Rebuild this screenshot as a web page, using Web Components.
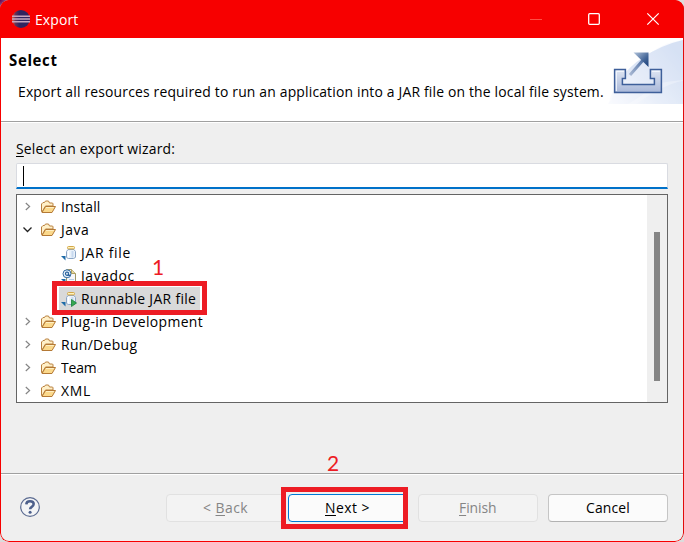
<!DOCTYPE html>
<html lang="en"><head><meta charset="utf-8"><title>Export</title>
<style>
html,body{margin:0;width:684px;height:542px;overflow:hidden}
body{background:radial-gradient(circle at 0 0,#650050 0,#b58aa9 10px,#dcdcdc 24px);font-family:"Open Sans","Noto Sans",sans-serif;font-size:14.5px;color:#000}
</style></head><body>
<export-dialog></export-dialog>
<script>
const define=(name,html,setup)=>customElements.define(name,class extends HTMLElement{
  connectedCallback(){
    if(this.shadowRoot)return;
    const t=document.createElement('template');t.innerHTML=html;
    this.attachShadow({mode:'open'}).append(t.content.cloneNode(true));
    if(setup)setup(this,this.shadowRoot);
  }
});

// Text line, slightly condensed, whose tracking is adjusted so that it spans the requested width.
define('fit-label',`<style>:host{display:inline-block;white-space:pre;line-height:20px}span{display:inline-block;transform:scaleX(.96);transform-origin:0 0}</style><span><slot></slot></span>`,(h,r)=>{
  const s=r.querySelector('span'),w=+h.getAttribute('w');
  h.style.width=w+'px';
  s.style.letterSpacing=((w/.96-s.offsetWidth)/h.textContent.length)+'px';
});

const folder=`<svg width="16" height="14" viewBox="0 0 16 14"><path d="M1.5 11.5V4L3 2.5h1.5L5.5 1h3L9.5 3h3l.5.8V6H5.5L2 12z" fill="#fff0c8" stroke="#b9803f"/><path d="M2 12.5L5.5 6.5h10L12 12.5z" fill="#fbd98c" stroke="#b47935" stroke-linejoin="round"/><path d="M6 7.5h7.8" stroke="#fff0c4"/></svg>`;
const corner=`<path d="M0 11h4.5v4.5z" fill="#1e6ba8"/>`;
const jar=`<path d="M7 4.5h6l1.5 2v5.5q-.8 1.5-2 1.5H7.5q-1.4 0-2-1.5V6.5z" fill="#e9f1fa" stroke="#8aa5c6"/><path d="M7.5 6v6.5" stroke="#fff" stroke-width="1.5"/><path d="M11.5 6v6.5" stroke="#c7d9ef" stroke-width="2"/><rect x="6.5" y="1.5" width="7" height="2.4" rx="1" fill="#fff3bd" stroke="#d3a748"/>`;
const icons={folder,
 jar:`<svg width="16" height="16">${jar}${corner}</svg>`,
 run:`<svg width="16" height="16">${jar}${corner}<path d="M10.5 8.5L15.5 12L10.5 15.5z" fill="#36a853" stroke="#168037" stroke-width=".8"/></svg>`,
 doc:`<svg width="16" height="16"><path d="M5.5 1.5h5l4 4v8h-9z" fill="#f6f7fb" stroke="#9c9669"/><path d="M10.5 1.5v4h4" fill="#e7d8a2" stroke="#b3a25e"/><path d="M8 11.5h5" stroke="#b7cce6"/><circle cx="6" cy="5.8" r="4" fill="#e5f0fa" stroke="#346da4"/><path d="M7.5 4.3v3q1.3.7 1.5-.8M7.5 5.8a1.5 1.7 0 1 1 0-.2" fill="none" stroke="#205b98" stroke-width="1.1"/>${corner}</svg>`};

define('tree-row',`<style>
:host{display:flex;align-items:center;height:23px;padding-left:4px}
.t{width:13px;height:9px;display:flex;justify-content:center;margin-right:6px}
.i{width:16px;display:flex;margin-right:5px}
:host([leaf]){padding-left:44px}
:host([leaf]) .t{display:none}
:host([leaf]) .i{margin-right:4px}
:host([selected]){width:141px;background:#d9d9d9;box-sizing:border-box;margin-left:42px;padding-left:2px}
fit-label{padding-top:1px}
svg{display:block}
</style><span class="t"></span><span class="i"></span><slot></slot>`,(h,r)=>{
  r.querySelector('.i').innerHTML=icons[h.getAttribute('icon')];
  r.querySelector('.t').innerHTML=h.hasAttribute('open')
   ?'<svg width="11" height="9"><path d="M1.5 2.5L5.5 6.5L9.5 2.5" fill="none" stroke="#222" stroke-width="1.3"/></svg>'
   :'<svg width="11" height="9"><path d="M3.8 1L7.6 4.5L3.8 8" fill="none" stroke="#858585" stroke-width="1.2"/></svg>';
});

define('push-button',`<style>
:host{display:flex;align-items:center;justify-content:center;width:120px;height:28px;box-sizing:border-box;padding-right:1px;border:1px solid #c5c5c5;border-bottom-color:#b2b2b2;border-radius:4px;background:#fbfbfb}
:host([disabled]){color:#858585;background:#f3f3f3;border-color:#e1e1e1}
:host([primary]){border-color:#0078d4}
</style><slot></slot>`);

define('title-bar',`<style>
:host{display:flex;align-items:center;height:38px;flex:none;background:#f70000;color:#fff;padding:0 24px 0 11px}
.g{flex:1}svg{flex:none;display:block}.a{margin-right:4px}
::slotted(*){margin-top:2px}
</style><svg class="a" width="20" height="20"><defs><linearGradient id="b" x2="1"><stop stop-color="#ee6840"/><stop offset=".18" stop-color="#683454"/><stop offset=".4" stop-color="#30245f"/></linearGradient></defs><circle cx="10" cy="10" r="9" fill="url(#b)"/><path d="M1 7.3h18M1 10h18M1 12.7h18" stroke="#c6a5bd" stroke-width="1.5"/></svg>
<slot></slot><span class="g"></span>
<svg width="130" height="14"><path d="M0 7.5h12" stroke="#ff4f45"/><rect x="58.7" y="1.7" width="10.6" height="10.6" rx="1" fill="none" stroke="#fff" stroke-width="1.3"/><path d="M117.3 1.3l11.4 11.4m0-11.4L117.3 12.7" stroke="#fff" stroke-width="1.2"/></svg>`);

define('wizard-banner',`<style>
:host{display:flex;flex:none;height:83px;background:#fff;justify-content:space-between;border-bottom:1px solid #a0a0a0;box-shadow:0 1px #fff}
.x{padding:12px 0 0 8px}h1{margin:0;font-size:15.6px;line-height:20px;font-weight:700;height:20px}
.d{padding:12px 0 0 9px}svg{display:block}
</style><div class="x"><h1><slot name="title"></slot></h1><div class="d"><slot></slot></div></div>
<svg width="75" height="66"><defs>
<linearGradient id="s" x1="0" x2="1" y1="1" y2=".3"><stop stop-color="#fff"/><stop offset=".45" stop-color="#e0e8f7"/><stop offset="1" stop-color="#c3d4ef"/></linearGradient>
<linearGradient id="t" x2="0" y2="1"><stop stop-color="#dfe6f3"/><stop offset="1" stop-color="#a9b8d9"/></linearGradient>
<linearGradient id="q" x2="1" y2="1"><stop stop-color="#b4c5dc"/><stop offset=".6" stop-color="#446698"/><stop offset="1" stop-color="#183d79"/></linearGradient>
<linearGradient id="w" x1="1" x2="0" y2="1"><stop stop-color="#4d6ea3"/><stop offset="1" stop-color="#a9b8d3"/></linearGradient></defs>
<path d="M0 66Q9 37 34 20Q53 7 75 2V66z" fill="url(#s)"/><path d="M42 15Q56 4 75 2V43Q58 45 28 66H0Q24 31 42 15" fill="#f2f6fd" opacity=".4"/><path d="M47 46Q62 43 75 42V66H20Q36 57 47 46" fill="#fff" opacity=".3"/>
<path d="M6.6 31.6H17.4V40.4H14.4V46.4H46.4V40.4H42.4V31.6H53.4V54.4H6.6z" fill="url(#t)" stroke="#3e5f9a" stroke-width="1.5"/><path d="M8.3 53V33.3H16M44 33.3h7.8" fill="none" stroke="#f7faff" stroke-width="1"/>
<path d="M22 37L36 21" stroke="url(#w)" stroke-width="3"/><path d="M25.5 14.5h15v14.5z" fill="url(#q)"/></svg>`);

define('search-field',`<style>:host{display:block;height:26px;box-sizing:border-box;background:#fff;border:1px solid #d9dbe1;border-bottom:2px solid #0071c9;border-radius:2px 2px 0 0;padding:2px 0 0 6px}i{display:block;width:1px;height:20px;background:#000}</style><i></i>`);

define('wizard-tree',`<style>
:host{display:flex;height:209px;box-sizing:border-box;border:1px solid #646464;background:#fff;margin-top:5px}
.r{flex:1}.s{width:20px;background:#efefef;padding:37px 0 0 7px;box-sizing:border-box}
.s i{display:block;width:6px;height:149px;background:#858585}
</style><div class="r"><slot></slot></div><div class="s"><i></i></div>`);

define('mark-box',`<style>:host{position:absolute;box-sizing:border-box;border:5px solid #ed1c24}</style>`);
define('mark-number',`<style>:host{position:absolute;color:#ed1c24;font:21px/24px Lato,sans-serif}</style><slot></slot>`);
define('help-icon',`<style>:host{display:block;width:20px;height:20px}svg{display:block}</style><svg width="20" height="20"><circle cx="10" cy="10" r="9.3" fill="#f3f4f6" stroke="#5b6b91" stroke-width="1.2"/><path d="M6.3 7.4Q6.4 4.2 10 4.2Q13.7 4.2 13.7 7.1Q13.7 8.7 11.8 9.8Q10.1 10.8 10.1 12.3" fill="none" stroke="#4c5f8b" stroke-width="2.5"/><circle cx="10.1" cy="15.3" r="1.5" fill="#4c5f8b"/></svg>`);

define('export-dialog',`<style>
:host{display:flex;flex-direction:column;position:relative;width:684px;height:542px;box-sizing:border-box;background:#efefef;border-radius:9px;overflow:hidden}
.edge{position:absolute;inset:0;border:1px solid #f70000;border-right-color:#e00b0b;border-radius:9px;pointer-events:none}
title-bar{margin:0}wizard-banner{margin:0 1px}
main{flex:1;padding:17px 16px 0;min-height:0}
.lab{height:20px;margin-bottom:4px;display:flex}
footer{height:69px;flex:none;box-sizing:border-box;border-top:1px solid #a0a0a0;box-shadow:inset 0 1px #fff;padding:20px 16px 0 20px;display:flex}
help-icon{margin-top:3px}.b{display:flex;margin-left:auto;gap:10px}.b push-button:nth-child(2){margin-left:-8px}
u{text-decoration-thickness:1px;text-underline-offset:2px}
</style>
<title-bar><fit-label w="43">Export</fit-label></title-bar>
<wizard-banner><fit-label slot="title" w="49">Select</fit-label><fit-label w="586">Export all resources required to run an application into a JAR file on the local file system.</fit-label></wizard-banner>
<main><div class="lab"><fit-label w="159"><u>S</u>elect an export wizard:</fit-label></div><search-field></search-field>
<wizard-tree>
<tree-row icon="folder"><fit-label w="39">Install</fit-label></tree-row>
<tree-row icon="folder" open><fit-label w="28">Java</fit-label></tree-row>
<tree-row icon="jar" leaf><fit-label w="50">JAR file</fit-label></tree-row>
<tree-row icon="doc" leaf><fit-label w="54">Javadoc</fit-label></tree-row>
<tree-row icon="run" leaf selected><fit-label w="115">Runnable JAR file</fit-label></tree-row>
<tree-row icon="folder"><fit-label w="142">Plug-in Development</fit-label></tree-row>
<tree-row icon="folder"><fit-label w="76">Run/Debug</fit-label></tree-row>
<tree-row icon="folder"><fit-label w="36">Team</fit-label></tree-row>
<tree-row icon="folder"><fit-label w="30">XML</fit-label></tree-row>
</wizard-tree></main>
<footer><help-icon></help-icon><div class="b">
<push-button disabled><fit-label w="45">&lt; <u>B</u>ack</fit-label></push-button>
<push-button primary><fit-label w="45"><u>N</u>ext &gt;</fit-label></push-button>
<push-button disabled><fit-label w="38"><u>F</u>inish</fit-label></push-button>
<push-button><fit-label w="44">Cancel</fit-label></push-button></div></footer>
<div class="edge"></div>
<mark-box style="left:52px;top:281px;width:155px;height:34px"></mark-box>
<mark-box style="left:281px;top:487px;width:127px;height:42px"></mark-box>
<mark-number style="left:152px;top:255px">1</mark-number>
<mark-number style="left:327px;top:451px">2</mark-number>`);
</script></body></html>
